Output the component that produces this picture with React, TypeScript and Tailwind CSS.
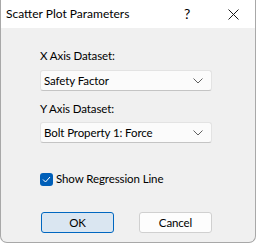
import React from "react";

function Chevron() {
  return (
    <svg width="10" height="6" viewBox="0 0 10 6" className="shrink-0">
      <path d="M0.5 0.5 L5 5 L9.5 0.5" fill="none" stroke="#606060" strokeWidth="1" />
    </svg>
  );
}

function Combo({ value }: { value: string }) {
  return (
    <div className="flex h-[21px] w-[172px] items-center justify-between rounded-[3px] border border-[#e3e3e3] border-b-[#c4c4c4] bg-[#fbfbfb] pl-[3px] pr-[8px] text-black">
      <span>{value}</span>
      <Chevron />
    </div>
  );
}

export default function App() {
  return (
    <div
      className="relative h-[243px] w-[256px] overflow-hidden rounded-b-[7px] border-x border-b border-[#a8a8a8] bg-[#f0f0f0] text-[11.5px] tracking-[-0.1px] text-black"
      style={{ fontFamily: 'Lato, "Noto Sans", sans-serif' }}
    >
      <div className="flex h-[28px] items-center bg-white pl-[5px]">
        <span className="flex-1 text-[12px] tracking-normal leading-none">Scatter Plot Parameters</span>
        <span className="w-[10px] text-center text-[14px] leading-none">?</span>
        <span className="ml-[35px] mr-[16px] flex w-[12px] items-center justify-center">
          <svg width="11" height="11" viewBox="0 0 11 11">
            <path d="M0.5 0.5 L10.5 10.5 M10.5 0.5 L0.5 10.5" stroke="#1a1a1a" strokeWidth="1" />
          </svg>
        </span>
      </div>
      <div className="flex flex-col pl-[39px] pt-[20px]">
        <div className="h-[16px] leading-[16px]">X Axis Dataset:</div>
        <div className="mt-[6px]">
          <Combo value="Safety Factor" />
        </div>
        <div className="mt-[10px] h-[16px] leading-[16px]">Y Axis Dataset:</div>
        <div className="mt-[5px]">
          <Combo value="Bolt Property 1: Force" />
        </div>
        <div className="mt-[28px] flex items-center">
          <div className="flex h-[13px] w-[13px] items-center justify-center rounded-[3px] bg-[#005fb8]">
            <svg width="9" height="7" viewBox="0 0 9 7">
              <path d="M1 3.5 L3.5 6 L8 1" fill="none" stroke="white" strokeWidth="1" />
            </svg>
          </div>
          <span className="ml-[3px] leading-[16px]">Show Regression Line</span>
        </div>
        <div className="mt-[25px] flex gap-[25px] pl-[1px]">
          <div className="flex h-[21px] w-[73px] items-center justify-center rounded-[3px] border border-[#0067c0] bg-[#dae6f1]">
            OK
          </div>
          <div className="flex h-[21px] w-[73px] items-center justify-center rounded-[3px] border border-[#d0d0d0] bg-[#fdfdfd]">
            Cancel
          </div>
        </div>
      </div>
    </div>
  );
}
